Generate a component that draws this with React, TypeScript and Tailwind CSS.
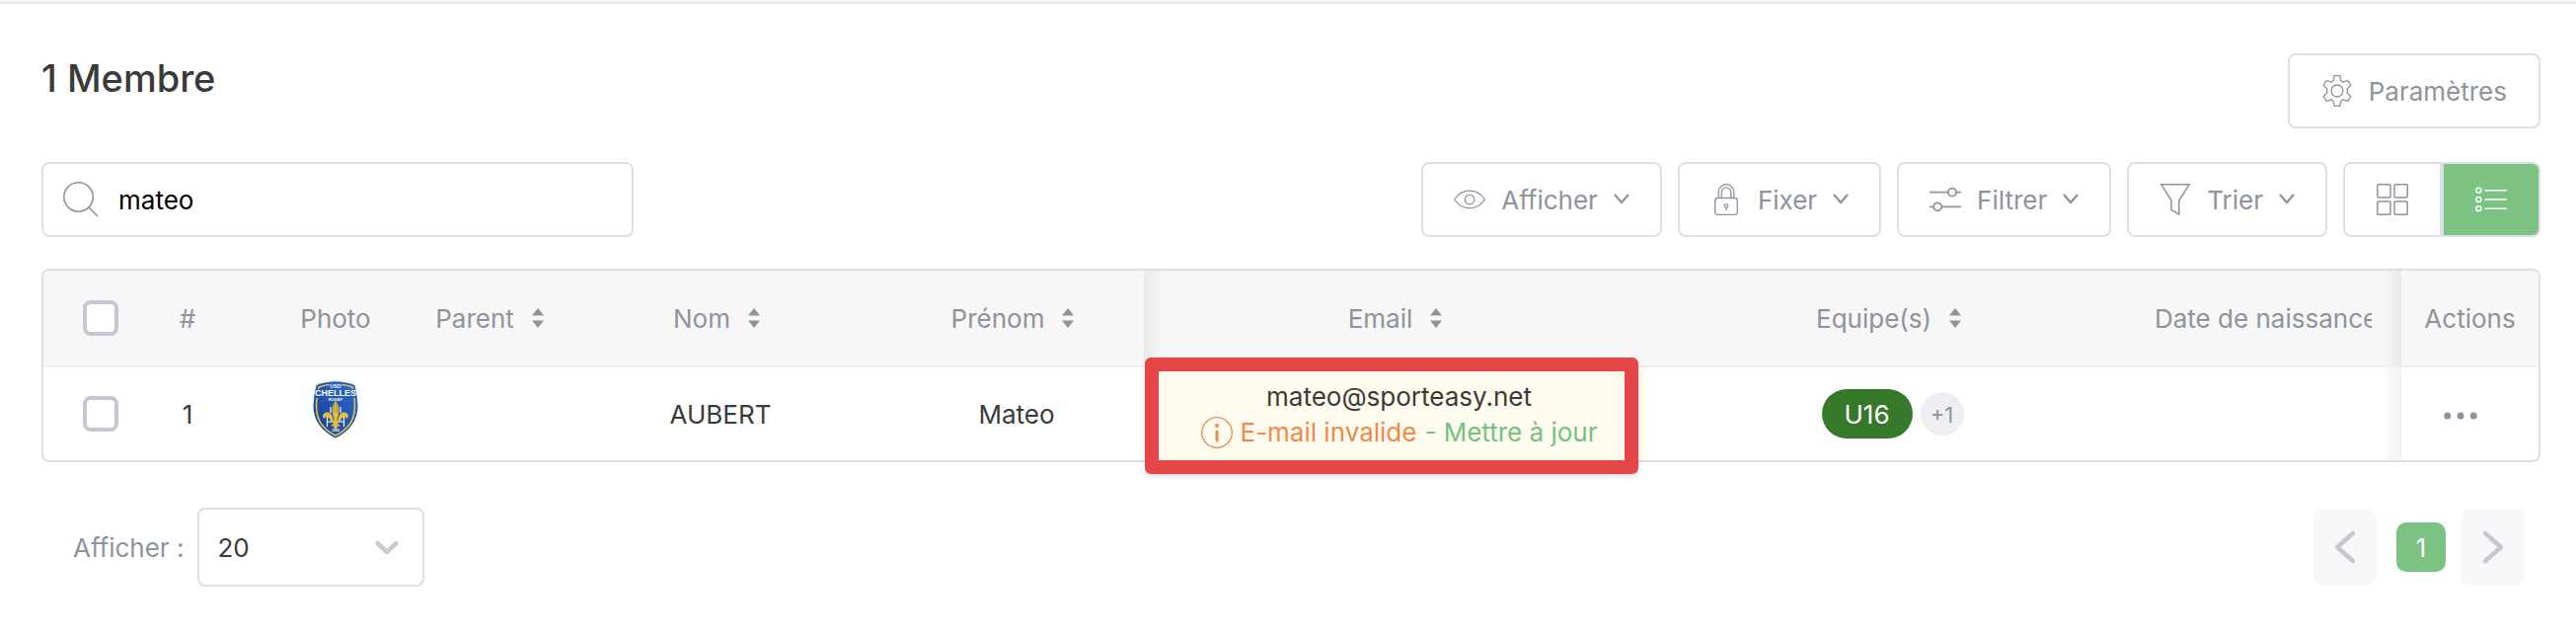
import type { ReactNode } from 'react'

interface ToolButtonProps {
  icon: ReactNode
  label: string
}

function Chevron() {
  return (
    <svg className="h-4 w-4 shrink-0" viewBox="0 0 16 16" fill="none" stroke="currentColor" strokeWidth="2.200">
      <path d="M1 3 8 11 15 3" />
    </svg>
  )
}

function ToolButton({ icon, label }: ToolButtonProps) {
  return (
    <button
      type="button"
      className="flex h-19 items-center gap-4 rounded-lg border-2 border-[#dcdfe6] bg-white px-[31px] text-[#8e939c]"
    >
      {icon}
      <span className="pt-0.5">{label}</span>
      <Chevron />
    </button>
  )
}

function SearchIcon() {
  return (
    <svg className="h-9 w-9 shrink-0 text-[#8e939c]" viewBox="0 0 36 36" fill="none" stroke="currentColor" strokeWidth="1.600">
      <circle cx="15.500" cy="15.500" r="14.700" />
      <path d="m26 26 9 9" />
    </svg>
  )
}

function GearIcon() {
  return (
    <svg className="h-8 w-8 shrink-0" viewBox="0 0 32 32" fill="none" stroke="currentColor" strokeWidth="1.300" strokeLinejoin="round">
      <path d="M13.200.7h5.600l1 4.900 2.700 1.500 4.500-1.500 2.800 4.900-3.500 3.200v4.600l3.500 3.200-2.800 4.900-4.500-1.500-2.700 1.500-1 4.900h-5.600l-1-4.900-2.700-1.500L5 26.400l-2.800-4.900 3.500-3.200v-4.600l-3.500-3.200L5 5.600l4.500 1.500 2.700-1.500z" />
      <circle cx="16" cy="16" r="6" />
    </svg>
  )
}

function EyeIcon() {
  return (
    <svg className="h-8 w-8 shrink-0" viewBox="0 0 32 32" fill="none" stroke="currentColor" strokeWidth="1.300">
      <path d="M.7 16C4.500 10.200 9.800 7.200 16 7.200S27.500 10.200 31.300 16C27.500 21.800 22.200 24.800 16 24.800S4.500 21.800.7 16z" />
      <circle cx="16" cy="16" r="4.800" />
    </svg>
  )
}

function LockIcon() {
  return (
    <svg className="h-8 w-8 shrink-0" viewBox="0 0 32 32" fill="none" stroke="currentColor" strokeWidth="1.300">
      <rect x="4.700" y="14.500" width="22.600" height="16.800" rx="2.500" />
      <path d="M8.200 14.500V8.500a7.800 7.800 0 0 1 15.600 0v6M11.200 14.500V8.700a4.800 4.800 0 0 1 9.600 0v5.800" />
      <circle cx="16" cy="22.500" r="1.800" />
      <path d="M16 24.300v3" />
    </svg>
  )
}

function SlidersIcon() {
  return (
    <svg className="h-8 w-8 shrink-0" viewBox="0 0 32 32" fill="none" stroke="currentColor" strokeWidth="1.800">
      <path d="M0 8.700h18.800M27.200 8.700H32M0 23.300h4M12.400 23.300H32" />
      <circle cx="23" cy="8.700" r="4" />
      <circle cx="8.200" cy="23.300" r="4" />
    </svg>
  )
}

function FunnelIcon() {
  return (
    <svg className="h-8 w-8 shrink-0" viewBox="0 0 32 32" fill="none" stroke="currentColor" strokeWidth="1.500">
      <path d="M1.800.8h28.400L19.800 17v14.200l-7.800-4.800V17z" />
    </svg>
  )
}

function GridIcon() {
  return (
    <svg className="h-8 w-8" viewBox="0 0 32 32" fill="none" stroke="currentColor" strokeWidth="1.500">
      <rect x=".8" y=".8" width="13.200" height="13.200" rx="1" />
      <rect x="18" y=".8" width="13.200" height="13.200" rx="1" />
      <rect x=".8" y="18" width="13.200" height="13.200" rx="1" />
      <rect x="18" y="18" width="13.200" height="13.200" rx="1" />
    </svg>
  )
}

function ListIcon() {
  return (
    <svg className="h-8 w-8" viewBox="0 0 32 32" fill="none" stroke="currentColor" strokeWidth="1.500">
      <circle cx="3.300" cy="6.700" r="2.500" />
      <circle cx="3.300" cy="16" r="2.500" />
      <circle cx="3.300" cy="25.300" r="2.500" />
      <path d="M9.500 6.700H32M9.500 16H32M9.500 25.300H32" />
    </svg>
  )
}

function InfoIcon() {
  return (
    <svg className="h-8 w-8 shrink-0" viewBox="0 0 32 32" fill="none" stroke="currentColor">
      <circle cx="16" cy="16" r="15.300" strokeWidth="1.300" />
      <circle cx="16" cy="9" r="2" fill="currentColor" stroke="none" />
      <path d="M16 15v9" strokeWidth="3" strokeLinecap="round" />
    </svg>
  )
}

function ClubBadge() {
  return (
    <svg className="mx-auto h-[58px] w-[46px]" viewBox="0 0 46 58" role="img" aria-label="USO Chelles Rugby">
      <defs>
        <linearGradient id="badge" x1="0" y1="1" x2="1" y2="0">
          <stop offset="0" stopColor="#153f93" />
          <stop offset="1" stopColor="#2b6bd0" />
        </linearGradient>
      </defs>
      <path d="M3.500 4Q23-3.500 42.500 4 45 14 45.500 24 46 46 23 57.500 0 46 .5 24 1 14 3.500 4z" fill="url(#badge)" />
      <path d="M17 3.500Q11 4 6 6L5.500 8M29 3.500Q35 4 40 6L40.500 8M4 17Q2 32 7.500 42 13 50 23 55 33 50 38.500 42 44 32 42 17" fill="none" stroke="#e8bd3d" strokeWidth="1.600" />
      <g fill="#fff" fontFamily="Liberation Sans, Arial, sans-serif" fontWeight="700" textAnchor="middle">
        <text x="23" y="6.500" fontSize="5">USO</text>
        <text x="23" y="15" fontSize="9">CHELLES</text>
        <text x="23" y="19.500" fontSize="4">RUGBY</text>
        <text x="23" y="51" fontSize="3.500">1992</text>
      </g>
      <path d="M14.500 33v13M31.500 33v13M14.500 41h17M18 26v6M28 26v6" stroke="#fff" strokeWidth="1.200" />
      <g fill="#e8bd3d">
        <path d="M23 20c-3.500 4-4.500 10-1.600 18l-.4 9 2 1.500 2-1.500-.4-9C27.500 30 26.500 24 23 20z" />
        <path d="M21 41c-1-7-3.500-10-7-9.500-4 .5-5 4-2.500 6.500.5-2.500 5-3 6.500 2zM25 41c1-7 3.500-10 7-9.500 4 .5 5 4 2.500 6.500-.5-2.500-5-3-6.500 2z" />
        <path d="M18 40h10v1.500H18zM21 42l-3 4 4-1zM25 42l3 4-4-1z" />
      </g>
      <path d="M21.700 22v10M24.300 22v10" stroke="#8a7a33" strokeWidth=".7" />
    </svg>
  )
}

function SortLabel({ children }: { children: ReactNode }) {
  return (
    <button type="button" className="mr-2 inline-flex items-center gap-[18px]">
      <span className="pt-0.5">{children}</span>
      <svg className="h-5 w-3" viewBox="0 0 12 20" fill="currentColor">
        <path d="M6 0 12 7.500H0zM6 20 0 12.500h12z" />
      </svg>
    </button>
  )
}

function Checkbox({ label }: { label: string }) {
  return (
    <input
      type="checkbox"
      aria-label={label}
      className="block h-9 w-9 appearance-none rounded-lg border-4 border-[#c5c8d0] bg-white"
    />
  )
}

export default function App() {
  return (
    <main className="border-t-2 border-[#f5f5f5] bg-white font-['Inter',sans-serif] text-[26px] leading-9 text-[#3a3a3a]">
      <div className="border-t-2 border-[#e5e9ee] pr-9 pl-[42px]">
        <header className="flex items-start justify-between pt-[50px]">
          <h1 className="text-[38px] leading-[50px] font-medium">1 Membre</h1>
          <button
            type="button"
            className="flex h-19 items-center gap-4 rounded-lg border-2 border-[#dcdfe6] px-8 text-[#8e939c]"
          >
            <GearIcon />
            <span className="pt-0.5">Paramètres</span>
          </button>
        </header>

        <div className="mt-[34px] flex items-center justify-between">
          <label className="flex h-19 w-[600px] items-center gap-5 rounded-lg border-2 border-[#dcdfe6] px-5">
            <SearchIcon />
            <input
              type="text"
              aria-label="Rechercher"
              defaultValue="mateo"
              className="min-w-0 flex-1 pt-0.5 text-black outline-none"
            />
          </label>
          <div className="flex gap-4">
            <ToolButton icon={<EyeIcon />} label="Afficher" />
            <ToolButton icon={<LockIcon />} label="Fixer" />
            <ToolButton icon={<SlidersIcon />} label="Filtrer" />
            <ToolButton icon={<FunnelIcon />} label="Trier" />
            <div className="flex h-19 w-[200px] overflow-hidden rounded-lg border-2 border-[#dcdfe6]">
              <button
                type="button"
                aria-label="Grille"
                className="flex flex-1 items-center justify-center border-r-4 border-[#dcdfe6] text-[#8e939c]"
              >
                <GridIcon />
              </button>
              <button type="button" aria-label="Liste" className="flex w-24 items-center justify-center bg-[#7cc283] text-white">
                <ListIcon />
              </button>
            </div>
          </div>
        </div>

        <div className="mt-8 rounded-lg border-2 border-[#dcdfe6]">
          <table className="w-full table-fixed border-separate border-spacing-0 text-center">
            <thead className="text-[#8e939c]">
              <tr className="h-[98px] *:border-b-2 *:border-[#eeeff3] *:bg-[#f7f7f7] *:p-0 *:font-normal">
                <th className="w-[97px] rounded-tl-md">
                  <div className="pl-10">
                    <Checkbox label="Tout sélectionner" />
                  </div>
                </th>
                <th className="w-[98px]">
                  <div className="pt-0.5">#</div>
                </th>
                <th className="w-[202px]">
                  <div className="pt-0.5">Photo</div>
                </th>
                <th className="w-[118px]">
                  <SortLabel>Parent</SortLabel>
                </th>
                <th className="w-[342px]">
                  <SortLabel>Nom</SortLabel>
                </th>
                <th className="w-[258px]">
                  <SortLabel>Prénom</SortLabel>
                </th>
                <th className="w-[509px] bg-linear-to-r from-[#e9e9e9] to-[#f7f7f7] to-[20px]">
                  <div className="pl-2">
                    <SortLabel>Email</SortLabel>
                  </div>
                </th>
                <th>
                  <div className="pl-2">
                    <SortLabel>Equipe(s)</SortLabel>
                  </div>
                </th>
                <th className="w-[274px] bg-linear-to-l from-[#e9e9e9] to-[#f7f7f7] to-[20px]">
                  <div className="mr-[30px] ml-6 overflow-hidden pt-0.5 text-left whitespace-nowrap">Date de naissance</div>
                </th>
                <th className="w-[139px] rounded-tr-md">
                  <div className="pt-0.5">Actions</div>
                </th>
              </tr>
            </thead>
            <tbody>
              <tr className="h-[94px] *:p-0">
                <td>
                  <div className="pl-10">
                    <Checkbox label="Sélectionner Mateo AUBERT" />
                  </div>
                </td>
                <td>
                  <div className="pt-0.5">1</div>
                </td>
                <td>
                  <div className="pb-2">
                    <ClubBadge />
                  </div>
                </td>
                <td />
                <td>
                  <div className="pt-0.5">AUBERT</div>
                </td>
                <td>
                  <div className="pt-0.5">Mateo</div>
                </td>
                <td className="relative bg-[#fffbef]">
                  <div className="pt-0.5 pl-2">mateo@sporteasy.net</div>
                  <div className="flex items-center justify-center gap-2 pl-2 whitespace-nowrap">
                    <span className="text-[#ec8b4a]">
                      <InfoIcon />
                    </span>
                    <span className="text-[#ec8b4a]">E-mail invalide</span>
                    <span className="text-[#74c180]">
                      - <a href="#maj">Mettre à jour</a>
                    </span>
                  </div>
                  <div className="pointer-events-none absolute -top-2.5 right-2 -bottom-3.5 left-px rounded-md border-14 border-[#e54648] shadow-md" />
                </td>
                <td>
                  <div className="flex items-center justify-center gap-2 pl-2">
                    <span className="flex h-[50px] w-[92px] items-center justify-center rounded-full bg-[#37792a] pt-0.5 text-white">
                      U16
                    </span>
                    <span className="flex h-11 w-11 items-center justify-center rounded-full bg-[#eeeff3] pt-0.5 text-[22px] text-[#8e939c]">
                      +1
                    </span>
                  </div>
                </td>
                <td className="bg-linear-to-l from-[#f1f1f1] to-white to-[20px]" />
                <td>
                  <button type="button" aria-label="Actions" className="mr-5 align-middle text-[#8e939c]">
                    <svg className="h-2 w-[34px]" viewBox="0 0 34 8" fill="currentColor">
                      <circle cx="3.700" cy="4" r="3.500" />
                      <circle cx="17" cy="4" r="3.500" />
                      <circle cx="30.300" cy="4" r="3.500" />
                    </svg>
                  </button>
                </td>
              </tr>
            </tbody>
          </table>
        </div>

        <footer className="mt-[46px] flex items-center justify-between pr-4 pl-8">
          <div className="flex items-center gap-3.5">
            <label htmlFor="page-size" className="pt-0.5 text-[#8e939c]">
              Afficher :
            </label>
            <div className="relative">
              <select
                id="page-size"
                defaultValue="20"
                className="block h-20 w-[230px] appearance-none rounded-lg border-2 border-[#dcdfe6] bg-white pt-0.5 pl-[18px]"
              >
                <option>20</option>
                <option>50</option>
                <option>100</option>
              </select>
              <svg
                className="pointer-events-none absolute top-[33px] right-[26px] h-4 w-6 text-[#cccccc]"
                viewBox="0 0 24 16"
                fill="none"
                stroke="currentColor"
                strokeWidth="4.500"
                strokeLinecap="round"
                strokeLinejoin="round"
              >
                <path d="m2.500 3 9.500 9 9.500-9" />
              </svg>
            </div>
          </div>
          <nav className="flex items-center text-[#c7c8cc]">
            <button type="button" aria-label="Page précédente" className="flex h-19 w-16 items-center justify-center rounded-lg bg-[#f7f8fa]">
              <svg className="h-9 w-6" viewBox="0 0 24 36" fill="none" stroke="currentColor" strokeWidth="4.500" strokeLinecap="round" strokeLinejoin="round">
                <path d="M20 4 4 18l16 14" />
              </svg>
            </button>
            <button type="button" className="mr-4 ml-5 h-[50px] w-[50px] rounded-[10px] bg-[#7cc283] pt-0.5 text-white">
              1
            </button>
            <button type="button" aria-label="Page suivante" className="flex h-19 w-16 items-center justify-center rounded-lg bg-[#f7f8fa]">
              <svg className="h-9 w-6" viewBox="0 0 24 36" fill="none" stroke="currentColor" strokeWidth="4.500" strokeLinecap="round" strokeLinejoin="round">
                <path d="m4 4 16 14L4 32" />
              </svg>
            </button>
          </nav>
        </footer>
      </div>
    </main>
  )
}
